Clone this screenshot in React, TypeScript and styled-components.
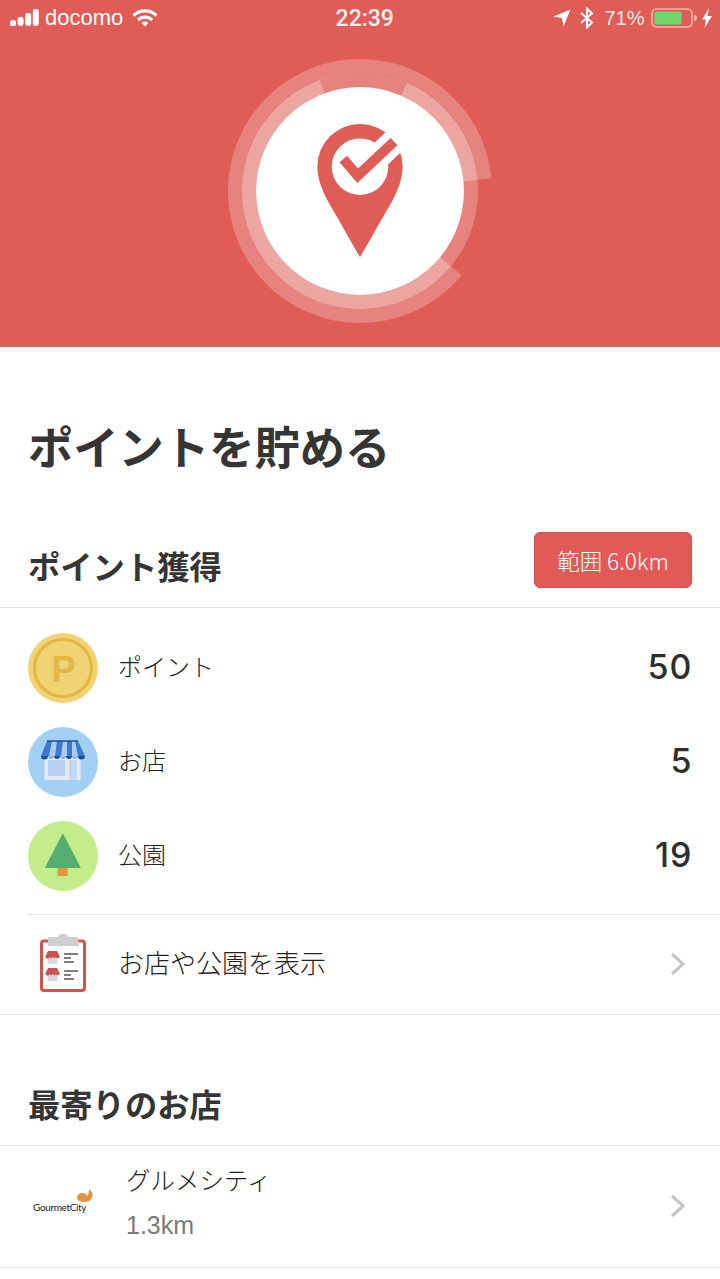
import React from "react";
import styled, { createGlobalStyle } from "styled-components";

const Global = createGlobalStyle`
  html, body { margin: 0; padding: 0; background: #fff; }
  body { width: 720px; height: 1279px; overflow: hidden; font-family: "Noto Sans CJK JP", "Liberation Sans", sans-serif; color: #333; }
`;

const Page = styled.div`width: 720px; height: 1279px; overflow: hidden; background: #fff;`;
const Hero = styled.header`height: 347px; background: #df5c57; display: flex; flex-direction: column;`;
const StatusBar = styled.div`
  height: 36px; display: grid; grid-template-columns: 1fr auto 1fr; align-items: center; padding: 0 8.5px 0 10px;
  color: #fff; font-family: "Liberation Sans", sans-serif; font-size: 22px;
`;
const StatusLeft = styled.div`display: flex; align-items: center; gap: 5px;`;
const StatusRight = styled.div`display: flex; align-items: center; justify-content: flex-end; gap: 6px; color: #fde9e8; font-size: 20px;`;
const Clock = styled.div`font-family: "Roboto", "Liberation Sans", sans-serif; font-weight: 500; font-size: 23px; margin-left: 8px; color: #fdeeed;`;
const Emblem = styled.div`width: 300px; height: 290px; margin: 9px auto 0; svg { display: block; }`;

const Title = styled.h1`margin: 0; padding: 74px 0 0 28px; height: 47px; line-height: 48px; font-size: 45.3px; font-weight: 700; color: #353535; white-space: nowrap;`;
const SectionHead = styled.div<{ $h: number }>`
  display: flex; align-items: flex-end; justify-content: space-between; height: ${p => p.$h}px;
  padding: 0 28px 19px 28px; box-sizing: border-box; border-bottom: 1px solid #e4e4e4;
`;
const SectionTitle = styled.h2`margin: 0 0 3px; font-size: 32.3px; font-weight: 700; color: #353535; line-height: 40px;`;
const RangeButton = styled.button`
  width: 158px; height: 56px; border: 1px solid #cf4f4c; border-radius: 6px; background: #e25a58; color: #fff; padding: 0;
  font-family: "Noto Sans CJK JP", "Liberation Sans", sans-serif; font-size: 22.5px; font-weight: 300; white-space: nowrap;
`;
const Stats = styled.div`padding: 25px 28px 23px; display: flex; flex-direction: column; gap: 24px;`;
const StatRow = styled.div`display: flex; align-items: center; height: 70px;`;
const Circle = styled.div`width: 70px; height: 70px; flex: none; svg { display: block; }`;
const StatLabel = styled.div`margin: 0 0 6px 20px; flex: 1; font-size: 24px; font-weight: 300; color: #222;`;
const StatValue = styled.div`font-family: "Inter", "Liberation Sans", sans-serif; font-size: 34px; font-weight: 500; color: #2e2e2e; letter-spacing: 1px; margin: 0 -0.5px 4px 0;`;
const ListBlock = styled.div`margin-left: 28px; border-top: 1px solid #e4e4e4;`;
const LinkRow = styled.div`display: flex; align-items: center; height: 99px; padding-right: 34px;`;
const ClipIcon = styled.div`width: 70px; height: 70px; flex: none; svg { display: block; }`;
const LinkLabel = styled.div`margin: -6px 0 0 20px; flex: 1; font-size: 26px; font-weight: 300; color: #222; white-space: nowrap;`;
const FullRule = styled.hr`margin: 0; border: 0; border-top: 1px solid #e4e4e4;`;
const ShopRow = styled.div`display: flex; align-items: center; height: 121px; padding: 0 34px 0 33px; border-bottom: 1px solid #e4e4e4;`;
const Logo = styled.div`position: relative; width: 60px; height: 24px; margin-top: -10px; flex: none;`;
const LogoText = styled.span`
  position: absolute; left: 0; bottom: 1px; font-family: "Lato", "Liberation Sans", sans-serif; font-size: 10px; letter-spacing: -0.35px; color: #222; white-space: nowrap;
`;
const LogoLeaf = styled.svg`position: absolute; left: 44px; top: -1px;`;
const ShopText = styled.div`margin: -12px 0 0 33px; flex: 1; display: flex; flex-direction: column; gap: 12px;`;
const ShopName = styled.div`font-size: 24.5px; font-weight: 300; color: #222; line-height: 36px;`;
const ShopDistance = styled.div`font-family: "Liberation Sans", sans-serif; font-size: 25px; color: #7b7b7b; line-height: 30px;`;
const ChevronMark = styled.svg`display: block; margin-top: -2px;`;

const Chevron = () => (
  <ChevronMark width="16" height="24" viewBox="0 0 16 24"><path d="M2 2l11 10L2 22" fill="none" stroke="#c6c6ca" strokeWidth="3.2" /></ChevronMark>
);

const EmblemArt = () => {
  const c = 150, m = 146;
  const pt = (r: number, a: number) => [c + r * Math.cos((a * Math.PI) / 180), m - r * Math.sin((a * Math.PI) / 180)];
  const arc = (r1: number, r2: number, from: number, to: number) => {
    const [a, b] = pt(r2, from), [d, e] = pt(r2, to), [f, g] = pt(r1, to), [h, i] = pt(r1, from);
    const large = to - from > 180 ? 1 : 0;
    return `M${a} ${b}A${r2} ${r2} 0 ${large} 0 ${d} ${e}L${f} ${g}A${r1} ${r1} 0 ${large} 1 ${h} ${i}Z`;
  };
  return (
    <svg width="300" height="290" viewBox="0 0 300 290">
      <path d={arc(118, 132, 5.5, 320.4)} fill="#fff" fillOpacity="0.24" />
      <circle cx={c} cy={m} r="111" fill="none" stroke="#fff" strokeOpacity="0.24" strokeWidth="14" />
      <path d={arc(104, 118, 110, 320.4)} fill="#fff" fillOpacity="0.28" />
      <path d={arc(104, 118, 5.4, 66.6)} fill="#fff" fillOpacity="0.28" />
      <circle cx={c} cy={m} r="104" fill="#fff" />
      <path d="M150 212.3L124 166.7Q107.3 140 107.3 121.7A42.7 42.7 0 0 1 192.7 121.7Q192.7 140 176 166.7Z" fill="#df5c57" />
      <circle cx="150" cy="121.7" r="28.3" fill="#fff" />
      <path d="M147.7 130.7L200 81.7" fill="none" stroke="#fff" strokeWidth="25" />
      <path d="M133.3 114L147.7 130.7L184 96.7" fill="none" stroke="#df5c57" strokeWidth="10" />
    </svg>
  );
};

const Coin = () => (
  <svg width="70" height="70" viewBox="0 0 70 70">
    <circle cx="35" cy="35" r="35" fill="#efd375" />
    <circle cx="35" cy="35" r="28.5" fill="none" stroke="#e3b945" strokeWidth="3.2" />
    <text x="35.5" y="48.5" textAnchor="middle" fontFamily="Liberation Sans, sans-serif" fontWeight="700" fontSize="37" fill="#e3b945">P</text>
  </svg>
);

const Store = () => (
  <svg width="70" height="70" viewBox="0 0 70 70">
    <circle cx="35" cy="35" r="35" fill="#a3d0f5" />
    <rect x="16.5" y="30" width="36" height="23" fill="#e6e9ee" />
    <rect x="20" y="33" width="17" height="16" fill="#b5cff0" />
    <rect x="41" y="33" width="8" height="20" fill="#c4d8ef" />
    <path d="M19 14h31l7 15H13Z" fill="#3f78c9" />
    <path d="M24 14h5l-2 15h-6ZM35 14h4v15h-6ZM44 14h3l3 15h-6Z" fill="#a8cdf3" />
    <path d="M19 14h31" stroke="#1d4f9c" strokeWidth="1.5" />
    <g fill="#1d4f9c">
      <path d="M13 29h7a3.500 3.500 0 0 1-7 0ZM26 29h6a3 3 0 0 1-6 0ZM38 29h6a3 3 0 0 1-6 0ZM50 29h7a3.500 3.500 0 0 1-7 0Z" />
    </g>
    <g fill="#8db7e8">
      <path d="M20 29h6a3 3 0 0 1-6 0ZM32 29h6a3 3 0 0 1-6 0ZM44 29h6a3 3 0 0 1-6 0Z" />
    </g>
  </svg>
);

const Tree = () => (
  <svg width="70" height="70" viewBox="0 0 70 70">
    <circle cx="35" cy="35" r="35" fill="#c3ec8a" />
    <rect x="29.7" y="46" width="10" height="9" fill="#e4963b" />
    <path d="M34.8 13.5L52 46.5H17.7Z" fill="#55ad72" stroke="#55ad72" strokeWidth="1.2" strokeLinejoin="round" />
  </svg>
);

const MiniShop = ({ y }: { y: number }) => (
  <g transform={`translate(18 ${y})`}>
    <rect x="1.5" y="5" width="10" height="8" fill="#d9d9d9" />
    <path d="M2 0h9l2.500 5a1.700 1.700 0 0 1-3.500 1 1.700 1.700 0 0 1-3.200 0 1.700 1.700 0 0 1-3.200 0A1.700 1.700 0 0 1-.5 5Z" fill="#c9534f" />
  </g>
);

const Clipboard = () => (
  <svg width="70" height="70" viewBox="0 0 70 70">
    <rect x="13.5" y="11" width="43" height="49.5" rx="2.5" fill="#fff" stroke="#cf5450" strokeWidth="3" />
    <path d="M20 8h10a5.500 5.500 0 0 1 10 0h10l1 9H20Z" transform="translate(0 -1)" fill="#cfcfcf" />
    <MiniShop y={21} />
    <MiniShop y={38} />
    <g stroke="#555" strokeWidth="1.3">
      <path d="M36 24h14M36 28h7M36 32h10M36 41h14M36 45h7M36 49h10" />
    </g>
  </svg>
);

export default function App() {
  return (
    <Page>
      <Global />
      <Hero>
        <StatusBar>
          <StatusLeft>
            <svg width="30" height="18" viewBox="0 0 30 18" fill="#fff">
              <rect x="0" y="11" width="6" height="6" rx="2.600" />
              <rect x="7.6" y="8" width="6" height="9" rx="2.400" />
              <rect x="15.2" y="4" width="6" height="13" rx="2.400" />
              <rect x="22.8" y="0" width="6" height="17" rx="2.400" />
            </svg>
            <span>docomo</span>
            <svg width="26" height="18" viewBox="0 0 26 18" style={{ marginLeft: 4 }} fill="none" stroke="#fff" strokeWidth="3.2">
              <path d="M1.5 6.5a16.500 16.500 0 0 1 23 0" />
              <path d="M6 11a10 10 0 0 1 14 0" />
              <path d="M13 17.500l-3.500-3.600a5 5 0 0 1 7 0Z" fill="#fff" stroke="none" />
            </svg>
          </StatusLeft>
          <Clock>22:39</Clock>
          <StatusRight>
            <svg width="18" height="18" viewBox="0 0 18 18" fill="#fff"><path d="M17.5.5L10.5 17.500l-1.600-8.400L.5 7.600Z" /></svg>
            <svg width="14" height="22" viewBox="0 0 14 22" fill="none" stroke="#fff" strokeWidth="2" style={{ margin: "0 4px 0 3px" }}>
              <path d="M1 6l11 9.500L7 20.500V1.500l5 5L1 16" />
            </svg>
            <span>71%</span>
            <svg width="46" height="20" viewBox="0 0 46 20">
              <rect x="1" y="1" width="40" height="18" rx="4.5" fill="none" stroke="#f5b4b1" strokeWidth="1.6" />
              <rect x="3.5" y="3.5" width="27" height="13" rx="1.5" fill="#72d56c" />
              <path d="M43 7a3 3 0 0 1 0 6Z" fill="#f5b4b1" />
            </svg>
            <svg width="10" height="20" viewBox="0 0 10 20" fill="#fff" style={{ marginLeft: -1 }}><path d="M7 0L0 11.500h4L2.500 20 10 8H5.500Z" /></svg>
          </StatusRight>
        </StatusBar>
        <Emblem><EmblemArt /></Emblem>
      </Hero>

      <Title>ポイントを貯める</Title>
      <SectionHead $h={140}>
        <SectionTitle>ポイント獲得</SectionTitle>
        <RangeButton>範囲 6.0km</RangeButton>
      </SectionHead>
      <Stats>
        <StatRow><Circle><Coin /></Circle><StatLabel>ポイント</StatLabel><StatValue>50</StatValue></StatRow>
        <StatRow><Circle><Store /></Circle><StatLabel>お店</StatLabel><StatValue>5</StatValue></StatRow>
        <StatRow><Circle><Tree /></Circle><StatLabel>公園</StatLabel><StatValue>19</StatValue></StatRow>
      </Stats>
      <ListBlock>
        <LinkRow>
          <ClipIcon><Clipboard /></ClipIcon>
          <LinkLabel>お店や公園を表示</LinkLabel>
          <Chevron />
        </LinkRow>
      </ListBlock>
      <FullRule />
      <SectionHead $h={131}>
        <SectionTitle>最寄りのお店</SectionTitle>
      </SectionHead>
      <ShopRow>
        <Logo>
          <LogoText>GourmetCity</LogoText>
          <LogoLeaf width="17" height="14" viewBox="0 0 17 14">
            <path d="M0 8.500C0 5.500 3 4 5.500 4S9.500 5.500 10.500 7C11.500 5 12 3 12 .5c3 1.500 4.500 5 3 8-1.500 3-4 4.500-7.500 4.500C3.500 13 0 11.500 0 8.500Z" fill="#e4943a" />
          </LogoLeaf>
        </Logo>
        <ShopText>
          <ShopName>グルメシティ</ShopName>
          <ShopDistance>1.3km</ShopDistance>
        </ShopText>
        <Chevron />
      </ShopRow>
    </Page>
  );
}
